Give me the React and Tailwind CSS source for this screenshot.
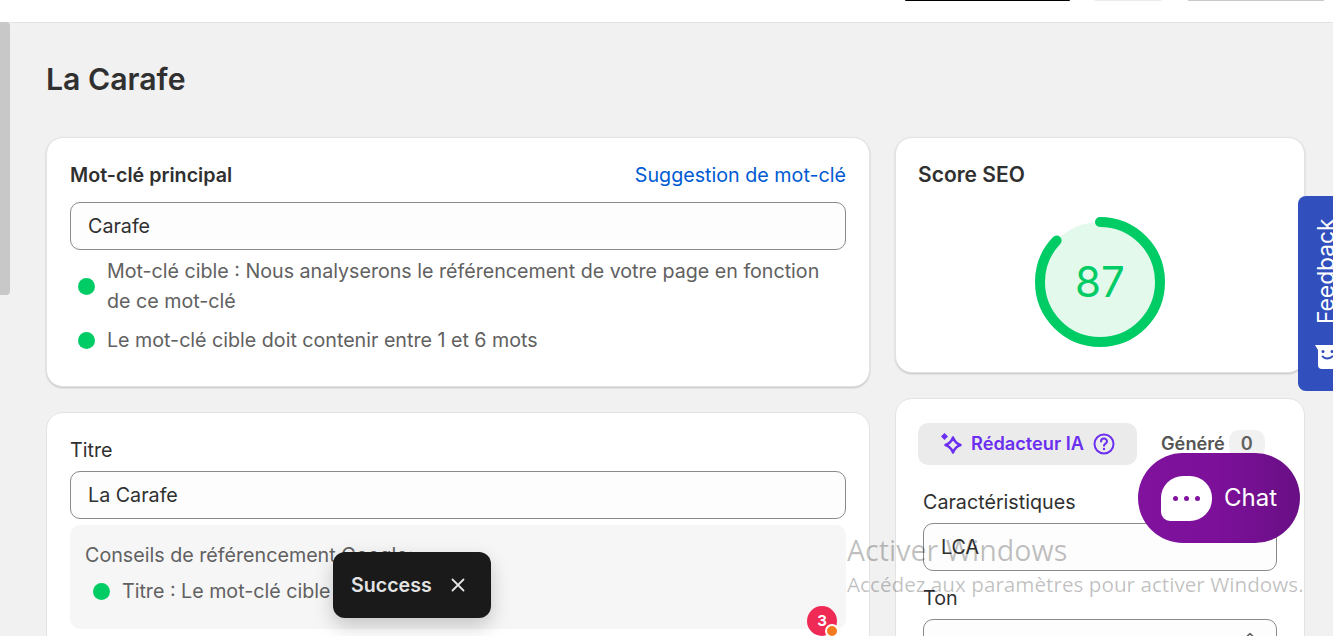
const font = { fontFamily: '"Inter", "Liberation Sans", sans-serif' }

function Dot() {
  return <span className="w-[17px] h-[17px] rounded-full bg-[#00cc66] shrink-0" />
}

function Hint({ children }) {
  return (
    <div className="flex items-center gap-[12px] pl-[8px] text-[19.650px] leading-[30px] text-[#616161]">
      <Dot />
      <span>{children}</span>
    </div>
  )
}

function Field({ value, className = '' }) {
  return (
    <div className={`h-[48px] flex items-center px-[17px] pt-[2px] border border-[#8a8a8a] rounded-[10px] bg-[#fdfdfd] text-[19.700px] text-[#303030] ${className}`}>
      {value}
    </div>
  )
}

function ScoreRing() {
  return (
    <svg width="132" height="132" viewBox="0 0 132 132">
      <circle cx="66" cy="66" r="60" fill="#e3f9ec" />
      <circle
        cx="66"
        cy="66"
        r="60"
        fill="none"
        stroke="#00cc66"
        strokeWidth="10"
        strokeLinecap="round"
        strokeDasharray="328 377"
        transform="rotate(-90 66 66)"
      />
      <text x="66" y="81" textAnchor="middle" fontSize="42" fill="#00cc66" fontFamily="Inter, sans-serif">87</text>
    </svg>
  )
}

function Sparkle() {
  return (
    <svg width="22" height="22" viewBox="0 0 22 22" fill="none">
      <path d="M13 4.500Q15 10 20.500 12Q15 14 13 19.500Q11 14 5.500 12Q11 10 13 4.500Z" stroke="#6b2ff0" strokeWidth="2.400" strokeLinejoin="round" />
      <path d="M4.500 0L8 3.500L4.500 7L1 3.500Z" fill="#6b2ff0" />
    </svg>
  )
}

function HelpIcon() {
  return (
    <svg width="22" height="22" viewBox="0 0 22 22" fill="none">
      <circle cx="11" cy="11" r="9.500" stroke="#6b2ff0" strokeWidth="2" />
      <path d="M8 8.500a3 3 0 0 1 6 0c0 2-3 2.200-3 4.300" stroke="#6b2ff0" strokeWidth="2" strokeLinecap="round" />
      <circle cx="11" cy="16" r="1.200" fill="#6b2ff0" />
    </svg>
  )
}

export default function App() {
  return (
    <div className="relative h-[636px] overflow-hidden bg-[#f1f1f1] text-[#303030]" style={font}>
      {/* top bar */}
      <div className="h-[23px] bg-white border-b border-[#e3e3e3] flex items-start pl-[905px]">
        <div className="w-[165px] h-px bg-black rounded-b" />
        <div className="w-[66px] h-px bg-[#ebebeb] ml-[25px]" />
        <div className="w-[136px] h-px bg-[#c9c9c9] ml-[27px]" />
      </div>

      <div className="flex">
        <div className="w-[10px] h-[273px] -mt-px bg-[#c8c8c8] rounded-r-[4px] shrink-0" />

        <main className="flex-1 pl-[36px] pr-[28px] min-w-0">
          <h1 className="mt-[36px] h-[40px] text-[30.200px] leading-[40px] font-semibold">La Carafe</h1>

          <div className="mt-[38px] grid grid-cols-[824px_410px] gap-x-[25px] items-start">
            {/* left column */}
            <div className="flex flex-col gap-[25px]">
              <section className="h-[250px] bg-white border border-[#e3e3e3] shadow-[0_1px_2px_rgba(0,0,0,0.2)] rounded-[17px] px-[23px] pt-[24px]">
                <div className="flex justify-between items-center h-[28px]">
                  <h2 className="text-[19.700px] font-semibold">Mot-clé principal</h2>
                  <a className="text-[19.700px] text-[#005bd3]">Suggestion de mot-clé</a>
                </div>
                <Field value="Carafe" className="mt-[12px]" />
                <div className="mt-[6px]">
                  <Hint>
                    Mot-clé cible : Nous analyserons le référencement de votre page en fonction
                    <br />
                    de ce mot-clé
                  </Hint>
                </div>
                <div className="mt-[9px]">
                  <Hint>Le mot-clé cible doit contenir entre 1 et 6 mots</Hint>
                </div>
              </section>

              <section className="h-[260px] bg-white border border-[#e3e3e3] rounded-t-[17px] px-[23px] pt-[23px]">
                <div className="text-[19.700px] leading-[28px]">Titre</div>
                <Field value="La Carafe" className="mt-[7px]" />
                <div className="mt-[6px] h-[104px] bg-[#f6f6f6] rounded-[10px] px-[15px] pt-[16px]">
                  <div className="text-[19.700px] leading-[28px] text-[#616161]">Conseils de référencement Google:</div>
                  <div className="mt-[7px]">
                    <Hint>Titre : Le mot-clé cible</Hint>
                  </div>
                </div>
              </section>
            </div>

            {/* right column */}
            <div className="flex flex-col gap-[25px]">
              <section className="h-[236px] bg-white border border-[#e3e3e3] shadow-[0_1px_2px_rgba(0,0,0,0.2)] rounded-[17px] px-[22px] pt-[23px]">
                <h2 className="h-[28px] leading-[28px] text-[21px] font-semibold">Score SEO</h2>
                <div className="flex justify-center mt-[27px]">
                  <ScoreRing />
                </div>
              </section>

              <section className="h-[260px] bg-white border border-[#e3e3e3] rounded-t-[17px] px-[22px] pt-[24px]">
                <div className="flex items-center">
                  <div className="w-[219px] h-[42px] rounded-[10px] bg-[#ebebeb] flex items-center justify-center gap-[9px] text-[#6b2ff0] text-[18.200px] font-semibold">
                    <Sparkle />
                    <span>Rédacteur IA</span>
                    <HelpIcon />
                  </div>
                  <span className="ml-[24px] text-[18.200px] font-semibold text-[#555555]">Généré</span>
                  <span className="ml-[4px] w-[36px] h-[28px] rounded-[10px] bg-[#f1f1f1] flex items-center justify-center text-[18.200px] font-semibold text-[#616161]">0</span>
                </div>
                <div className="px-[5px]">
                  <div className="mt-[23px] text-[19.700px] leading-[28px]">Caractéristiques</div>
                  <Field value="LCA" className="mt-[7px]" />
                  <div className="mt-[13px] text-[19.700px] leading-[28px]">Ton</div>
                  <div className="mt-[7px] h-[48px] flex justify-end items-start pt-[12px] pr-[21px] border border-[#8a8a8a] rounded-[10px] bg-[#fdfdfd]">
                    <svg width="10" height="6" viewBox="0 0 10 6" fill="none" stroke="#616161" strokeWidth="1.600" strokeLinecap="round" strokeLinejoin="round">
                      <path d="M1.500 5L5 1.500L8.500 5" />
                    </svg>
                  </div>
                </div>
              </section>
            </div>
          </div>
        </main>
      </div>

      {/* overlays */}
      <div className="absolute left-[847px] top-[531px] text-[#000000]/25 pointer-events-none" style={{ fontFamily: '"Open Sans", sans-serif' }}>
        <div className="text-[28.600px] leading-[37px]">Activer Windows</div>
        <div className="text-[20.700px] leading-[27px] mt-[3px] whitespace-nowrap">Accédez aux paramètres pour activer Windows.</div>
      </div>

      <div className="absolute left-[333px] top-[552px] w-[158px] h-[66px] rounded-[12px] bg-[#1a1a1a] shadow-[0_8px_20px_rgba(0,0,0,0.2)] flex items-center pl-[18px] gap-[19px] text-[#e3e3e3]">
        <span className="mt-[2px] text-[19.600px] font-semibold">Success</span>
        <svg width="14" height="14" viewBox="0 0 14 14" stroke="#e3e3e3" strokeWidth="1.800" strokeLinecap="round">
          <path d="M1.500 1.500l11 11M12.500 1.500l-11 11" />
        </svg>
      </div>

      <div className="absolute left-[807px] top-[606px] w-[30px] h-[30px] rounded-full bg-[#ef2a55] text-white text-[15px] font-bold flex items-center justify-center">
        3
        <span className="absolute left-[18px] top-[18px] w-[14px] h-[14px] rounded-full bg-[#f47a20] border-2 border-white" />
      </div>

      <div className="absolute left-[1138px] top-[453px] w-[162px] h-[90px] rounded-full bg-gradient-to-r from-[#80129e] via-[#7c1099] to-[#690f85] flex items-center pl-[23px] gap-[12px]">
        <div className="w-[51px] h-[45px] bg-white rounded-[22px] rounded-bl-[9px] flex items-center justify-center gap-[6px]">
          <span className="w-[5px] h-[5px] rounded-full bg-[#80129e]" />
          <span className="w-[5px] h-[5px] rounded-full bg-[#80129e]" />
          <span className="w-[5px] h-[5px] rounded-full bg-[#80129e]" />
        </div>
        <span className="text-white text-[24px]">Chat</span>
      </div>

      <div className="absolute left-[1298px] top-[196px] w-[35px] h-[195px] rounded-l-[8px] bg-[#3150bd] overflow-hidden">
        <span className="absolute left-[17px] top-[24px] text-white text-[22.800px] leading-[22px] [writing-mode:vertical-rl] rotate-180 h-[104px] flex items-center whitespace-nowrap">Feedback</span>
        <svg className="absolute left-[17px] top-[149px]" width="18" height="24" viewBox="0 0 18 24">
          <path d="M0 0H18V24H7Q3 24 3 20V5Z" fill="#fff" />
          <circle cx="8" cy="6.500" r="1.500" fill="#3150bd" />
          <circle cx="17" cy="6.500" r="1.500" fill="#3150bd" />
          <path d="M7 11Q12 16 18 11" stroke="#3150bd" strokeWidth="1.800" fill="none" />
        </svg>
      </div>
    </div>
  )
}
